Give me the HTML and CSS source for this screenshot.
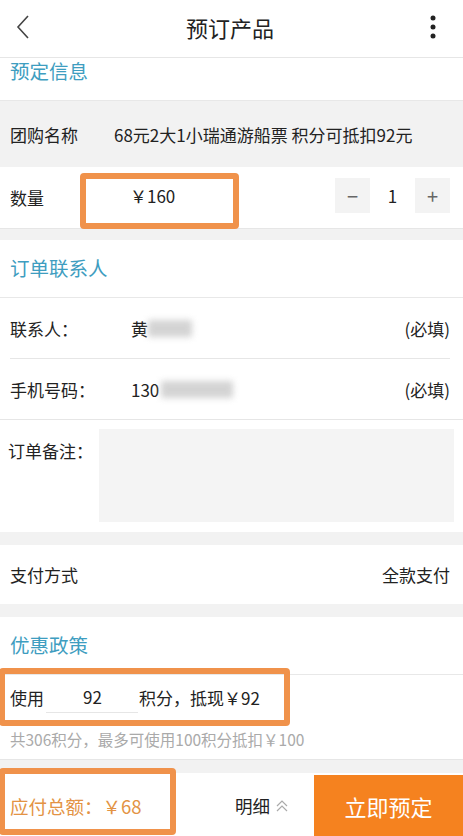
FILE: index.html
```html
<!DOCTYPE html>
<html lang="zh">

<head>
    <meta charset="UTF-8">
    <meta name="viewport" content="width=device-width, initial-scale=1.0">
    <title>预订产品</title>
    <link rel="stylesheet" href="styles.css">
</head>

<body>
    <div class="page">
        <!--top bar-->
        <div class="topbar">
            <svg class="back" width="16" height="26" viewBox="0 0 16 26">
                <polyline points="13,2 3,13 13,24" fill="none" stroke="#444" stroke-width="1.6" />
            </svg>
            <div class="title">预订产品</div>
            <svg class="more" width="8" height="24" viewBox="0 0 8 24">
                <circle cx="4" cy="3" r="2.5" fill="#222" />
                <circle cx="4" cy="12" r="2.5" fill="#222" />
                <circle cx="4" cy="21" r="2.5" fill="#222" />
            </svg>
        </div>

        <div class="main">
            <!--booking info-->
            <div class="sec-title first">预定信息</div>
            <div class="row grey tall">
                <span class="label">团购名称</span>
                <span class="deal">68元2大1小瑞通游船票 积分可抵扣92元</span>
            </div>
            <div class="row qty">
                <span class="label">数量</span>
                <span class="price">￥160</span>
                <div class="stepper">
                    <span class="step-btn">−</span>
                    <span class="step-num">1</span>
                    <span class="step-btn">+</span>
                </div>
                <div class="mark mark-price"></div>
            </div>
            <div class="gap small"></div>

            <!--contact-->
            <div class="sec-title">订单联系人</div>
            <div class="row contact inset">
                <span class="label wide">联系人：</span>
                <span class="value">黄<span class="blur short"></span></span>
                <span class="req">(必填)</span>
            </div>
            <div class="row contact last">
                <span class="label wide">手机号码：</span>
                <span class="value">130<span class="blur long"></span></span>
                <span class="req">(必填)</span>
            </div>
            <div class="remark">
                <span class="label">订单备注：</span>
                <div class="remark-box"></div>
            </div>
            <div class="gap"></div>

            <div class="row pay">
                <span class="label">支付方式</span>
                <span class="req">全款支付</span>
            </div>
            <div class="gap"></div>

            <!--discounts-->
            <div class="sec-title">优惠政策</div>
            <div class="points">
                <div class="points-line">
                    <span>使用</span>
                    <span class="points-input">92</span>
                    <span>积分，抵现￥92</span>
                </div>
                <div class="mark mark-points"></div>
            </div>
            <div class="hint">共306积分，最多可使用100积分抵扣￥100</div>
            <div class="gap"></div>
        </div>

        <!--bottom bar-->
        <div class="bottombar">
            <div class="total">应付总额：￥68</div>
            <div class="detail">明细
                <svg width="14" height="14" viewBox="0 0 14 14">
                    <polyline points="2,7 7,2 12,7" fill="none" stroke="#aaa" stroke-width="1.2" />
                    <polyline points="2,12 7,7 12,12" fill="none" stroke="#aaa" stroke-width="1.2" />
                </svg>
            </div>
            <div class="buy">立即预定</div>
            <div class="mark mark-total"></div>
        </div>
    </div>
</body>

</html>
```

FILE: styles.css
```css
body {
    margin: 0;
    font-family: "Noto Sans CJK SC", "Noto Sans", sans-serif;
    color: #222;
    background: #fff;
}

.page {
    width: 463px;
    height: 836px;
    display: flex;
    flex-direction: column;
    overflow: hidden;
}

/* top bar */
.topbar {
    height: 57px;
    flex-shrink: 0;
    display: flex;
    align-items: center;
    justify-content: space-between;
    padding: 0 26px 0 15px;
    border-bottom: 1px solid #e6e6e6;
}

.back {
    margin-top: -3px;
}

.title {
    font-size: 22px;
    margin-top: -4px;
}

.more {
    margin-top: -3px;
}

.main {
    flex: 1;
}

/* section titles */
.sec-title {
    height: 58px;
    box-sizing: border-box;
    padding: 14px 10px 0;
    font-size: 19.5px;
    line-height: 28px;
    color: #3e9dc0;
    border-bottom: 1px solid #e8e8e8;
}

.sec-title.first {
    height: 43px;
    padding-top: 0;
    line-height: 26px;
}

/* rows */
.row {
    position: relative;
    display: flex;
    align-items: center;
    padding: 0 13px 0 10px;
    font-size: 17px;
}

.row.grey {
    background: #f2f2f2;
}

.row.tall {
    height: 66px;
}

.deal {
    margin-left: 36px;
}

.row.qty {
    height: 61px;
    border-bottom: 1px solid #e6e6e6;
}

.price {
    margin-left: 86px;
    margin-top: -4px;
}

.stepper {
    margin-left: auto;
    display: flex;
    align-items: center;
    margin-top: -5px;
}

.step-btn {
    width: 35px;
    height: 35px;
    background: #f3f3f3;
    color: #666;
    font-size: 20px;
    display: flex;
    align-items: center;
    justify-content: center;
}

.step-num {
    width: 45px;
    text-align: center;
}

.gap {
    height: 13px;
    background: #f2f2f2;
}

.gap.small {
    height: 11px;
}

.row.contact {
    height: 59px;
    margin-top: 1px;
}

.row.contact.inset::after {
    content: "";
    position: absolute;
    left: 10px;
    right: 13px;
    bottom: -1px;
    height: 1px;
    background: #e6e6e6;
}

.row.contact.last {
    height: 60px;
    border-bottom: 1px solid #e6e6e6;
}

.label.wide {
    width: 121px;
}

.value {
    display: flex;
    align-items: center;
}

.blur {
    display: inline-block;
    height: 17px;
    background: #c9c9c9;
    filter: blur(3px);
    opacity: 0.8;
}

.blur.short {
    width: 44px;
}

.blur.long {
    width: 72px;
    margin-left: 2px;
}

.req {
    margin-left: auto;
}

/* remark */
.remark {
    height: 112px;
    display: flex;
    padding: 9px 9px 0 8px;
    box-sizing: border-box;
    font-size: 17px;
}

.remark .label {
    width: 91px;
    margin-top: 9px;
}

.remark-box {
    flex: 1;
    height: 93px;
    background: #f4f4f4;
}

.row.pay {
    height: 59px;
}

/* points */
.points {
    position: relative;
    height: 44px;
    padding: 0 10px;
    display: flex;
    align-items: center;
    font-size: 17px;
}

.points-line {
    display: flex;
    align-items: center;
}

.points-input {
    width: 92px;
    margin: 0 1px 0 2px;
    padding-left: 37px;
    box-sizing: border-box;
    border-bottom: 1px solid #e6e6e6;
    line-height: 30px;
    margin-top: 10px;
    position: relative;
    top: -5px;
}

.hint {
    height: 40px;
    padding: 0 10px;
    font-size: 15.5px;
    line-height: 40px;
    color: #aaa;
    border-bottom: 1px solid #e6e6e6;
}

/* bottom bar */
.bottombar {
    position: relative;
    height: 61px;
    flex-shrink: 0;
    display: flex;
    align-items: center;
}

.total {
    width: 235px;
    padding-left: 10px;
    box-sizing: border-box;
    font-size: 18.5px;
    color: #e39344;
}

.detail {
    width: 79px;
    font-size: 17.5px;
    display: flex;
    align-items: center;
    gap: 5px;
}

.buy {
    flex: 1;
    align-self: stretch;
    background: #f5821f;
    color: #fff;
    font-size: 22px;
    display: flex;
    align-items: center;
    justify-content: center;
}

/* orange highlight annotations */
.mark {
    position: absolute;
    border: 6px solid #f0924b;
    border-radius: 4px;
    box-sizing: border-box;
    pointer-events: none;
}

.mark-price {
    left: 80px;
    top: 6px;
    width: 159px;
    height: 56px;
}

.mark-points {
    left: -1px;
    top: -7px;
    width: 291px;
    height: 58px;
}

.mark-total {
    left: -1px;
    top: -7px;
    width: 177px;
    height: 67px;
}
```
